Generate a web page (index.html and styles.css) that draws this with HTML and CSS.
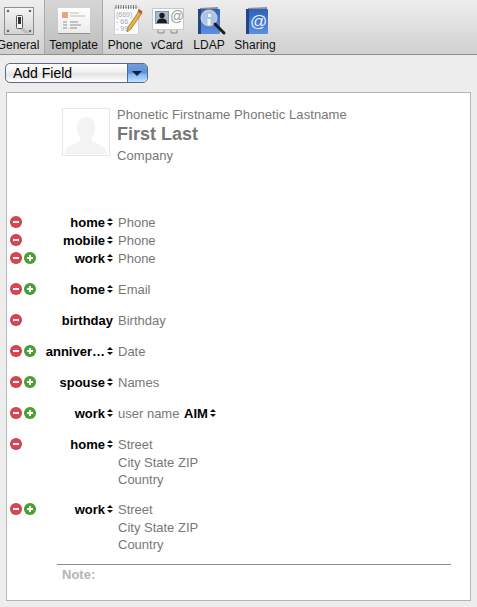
FILE: index.html
```html
<html>
    <head>
        <link rel="stylesheet" href="styles.css">
    </head>
    <body>
        <div class="toolbar">
            <div class="tool tool-general">
                <svg width="52" height="35" viewBox="0 0 52 35">
                    <defs>
                        <linearGradient id="plate" x1="0" y1="0" x2="0" y2="1"><stop offset="0" stop-color="#f6f6f6"/><stop offset="1" stop-color="#d2d2d2"/></linearGradient>
                        <linearGradient id="page" x1="0" y1="0" x2="0" y2="1"><stop offset="0" stop-color="#ffffff"/><stop offset="1" stop-color="#ececec"/></linearGradient>
                        <linearGradient id="book" x1="0" y1="0" x2="0" y2="1"><stop offset="0" stop-color="#2f62b8"/><stop offset="1" stop-color="#5b8fe0"/></linearGradient>
                    </defs>
                    <rect x="12.500" y="4.500" width="29" height="27" fill="url(#plate)" stroke="#8d8d8d"/>
                    <circle cx="16" cy="8" r="1.300" fill="#6a6a6a"/><circle cx="38" cy="8" r="1.300" fill="#6a6a6a"/>
                    <circle cx="16" cy="28" r="1.300" fill="#6a6a6a"/><circle cx="38" cy="28" r="1.300" fill="#6a6a6a"/>
                    <path d="M30 24l8 6h-6l-4-4z" fill="#bdbdbd"/>
                    <rect x="24.500" y="12.500" width="6" height="13" rx="1" fill="#f4f4f4" stroke="#555"/>
                    <rect x="26" y="14" width="3" height="7" fill="#333"/>
                </svg>
                <span>General</span>
            </div>
            <div class="tool tool-active">
                <svg width="57" height="35" viewBox="0 0 57 35">
                    <rect x="13" y="5" width="32" height="25" fill="url(#page)"/>
                    <path d="M13 30.500h32" stroke="#8f8f8f"/>
                    <rect x="17" y="9" width="6" height="6" fill="#eda27f"/>
                    <path d="M25 10h9M25 13h15" stroke="#cbb8ae"/>
                    <path d="M18 19h4M25 19h8M18 22h4M25 22h11M18 25h4M25 25h7" stroke="#8f8f8f"/>
                </svg>
                <span>Template</span>
            </div>
            <div class="tool">
                <svg width="44" height="35" viewBox="0 0 44 35">
                    <rect x="11.500" y="4.500" width="24" height="27" fill="#fbfbfb" stroke="#d0d0d0"/>
                    <path d="M13 2v4M15.500 2v4M18 2v4M20.500 2v4M23 2v4M25.500 2v4M28 2v4M30.500 2v4M33 2v4" stroke="#777"/>
                    <text x="13" y="14" class="icon-note">(669)</text>
                    <text x="13" y="21" class="icon-note">- 66</text>
                    <text x="13" y="28" class="icon-note">- 99</text>
                    <path d="M36 8l3 2-11 16-4 3 1-5z" fill="#e9b143" stroke="#7d5c22" stroke-width="0.600"/>
                    <path d="M36 6l3.500 2.500-1.500 2.500-3.500-2.500z" fill="#c9503c"/>
                </svg>
                <span>Phone</span>
            </div>
            <div class="tool">
                <svg width="40" height="35" viewBox="0 0 40 35">
                    <rect x="5.500" y="5.500" width="31" height="21" fill="#fcfcfc" stroke="#c8c8c8"/>
                    <rect x="8.500" y="8.500" width="13" height="12" fill="#aab7ce" stroke="#8494b0"/>
                    <circle cx="15" cy="12.500" r="2.700" fill="#1c1c1c"/>
                    <path d="M10 20c0-3.500 2.500-4.500 5-4.500s5 1 5 4.500z" fill="#1c1c1c"/>
                    <path d="M11 27v3h6v-3M24 27v3h6v-3" fill="#ddd" stroke="#8a8a8a"/>
                    <text x="23" y="18" class="icon-at">@</text>
                </svg>
                <span>vCard</span>
            </div>
            <div class="tool">
                <svg width="44" height="35" viewBox="0 0 44 35">
                    <path d="M13 5l18-1v5H13z" fill="#8d8f96"/>
                    <rect x="11" y="6" width="22" height="25" rx="1" fill="url(#book)"/>
                    <rect x="11" y="6" width="3" height="25" fill="#24457f"/>
                    <circle cx="22" cy="15" r="7.500" fill="#a9c4ec" stroke="#c4c8d0" stroke-width="2"/>
                    <path d="M21 11h3v3h-3zM20.500 16h3v6h-3z" fill="#f2f5fb"/>
                    <path d="M28 21l9 9" stroke="#1c1c1c" stroke-width="3" stroke-linecap="round"/>
                </svg>
                <span>LDAP</span>
            </div>
            <div class="tool">
                <svg width="48" height="35" viewBox="0 0 48 35">
                    <path d="M17 5l19-1v5H17z" fill="#8d8f96"/>
                    <rect x="15" y="6" width="22" height="25" rx="1" fill="url(#book)"/>
                    <rect x="15" y="6" width="3" height="25" fill="#24457f"/>
                    <text x="19" y="24" class="icon-share">@</text>
                </svg>
                <span>Sharing</span>
            </div>
        </div>

        <div class="content">
            <div class="add-field">
                <span class="add-label">Add Field</span>
                <span class="add-arrow"></span>
            </div>

            <div class="card">
                <div class="person">
                    <div class="photo">
                        <svg width="46" height="46" viewBox="0 0 46 46">
                            <path d="M2 45c0-7 6-9 12-11 4-2 4-4 3-6-2-2-3-6-3-10 0-6 4-10 9-10s9 4 9 10c0 4-1 8-3 10-1 2-1 4 3 6 6 2 12 4 12 11z" fill="#f3f3f3"/>
                        </svg>
                    </div>
                    <div class="names">
                        <div class="phonetic">Phonetic Firstname Phonetic Lastname</div>
                        <div class="full-name">First Last</div>
                        <div class="company">Company</div>
                    </div>
                </div>

                <div class="fields">
                    <div class="group">
                        <div class="row">
                            <span class="btns"><i class="btn minus"></i></span>
                            <span class="label">home</span><i class="updown"></i>
                            <span class="value">Phone</span>
                        </div>
                        <div class="row">
                            <span class="btns"><i class="btn minus"></i></span>
                            <span class="label">mobile</span><i class="updown"></i>
                            <span class="value">Phone</span>
                        </div>
                        <div class="row">
                            <span class="btns"><i class="btn minus"></i><i class="btn plus"></i></span>
                            <span class="label">work</span><i class="updown"></i>
                            <span class="value">Phone</span>
                        </div>
                    </div>
                    <div class="group">
                        <div class="row">
                            <span class="btns"><i class="btn minus"></i><i class="btn plus"></i></span>
                            <span class="label">home</span><i class="updown"></i>
                            <span class="value">Email</span>
                        </div>
                    </div>
                    <div class="group">
                        <div class="row">
                            <span class="btns"><i class="btn minus"></i></span>
                            <span class="label no-arrow">birthday</span>
                            <span class="value">Birthday</span>
                        </div>
                    </div>
                    <div class="group">
                        <div class="row">
                            <span class="btns"><i class="btn minus"></i><i class="btn plus"></i></span>
                            <span class="label">anniver…</span><i class="updown"></i>
                            <span class="value">Date</span>
                        </div>
                    </div>
                    <div class="group">
                        <div class="row">
                            <span class="btns"><i class="btn minus"></i><i class="btn plus"></i></span>
                            <span class="label">spouse</span><i class="updown"></i>
                            <span class="value">Names</span>
                        </div>
                    </div>
                    <div class="group">
                        <div class="row">
                            <span class="btns"><i class="btn minus"></i><i class="btn plus"></i></span>
                            <span class="label">work</span><i class="updown"></i>
                            <span class="value">user name <b class="service">AIM</b></span><i class="updown"></i>
                        </div>
                    </div>
                    <div class="group group-address">
                        <div class="row">
                            <span class="btns"><i class="btn minus"></i></span>
                            <span class="label">home</span><i class="updown"></i>
                            <span class="value">Street</span>
                        </div>
                        <div class="row"><span class="value indent">City State ZIP</span></div>
                        <div class="row"><span class="value indent">Country</span></div>
                    </div>
                    <div class="group group-address">
                        <div class="row">
                            <span class="btns"><i class="btn minus"></i><i class="btn plus"></i></span>
                            <span class="label">work</span><i class="updown"></i>
                            <span class="value">Street</span>
                        </div>
                        <div class="row"><span class="value indent">City State ZIP</span></div>
                        <div class="row"><span class="value indent">Country</span></div>
                    </div>
                </div>

                <div class="note">Note:</div>
            </div>
        </div>
    </body>
</html>
```

FILE: styles.css
```css
* {
    margin: 0;
    padding: 0;
    box-sizing: border-box;
}

html,body {
    height: 100%;
}

body {
    background: #ededed;
    font-family: "Liberation Sans", Arial, sans-serif;
    font-size: 13px;
    overflow: hidden;
}

.toolbar {
    height: 55px;
    display: flex;
    margin-left: -8px;
    background: linear-gradient(#eeeeee, #d0d0d0);
    border-bottom: 1px solid #8f8f8f;
}

.tool {
    width: 44px;
    height: 54px;
    flex: none;
    display: flex;
    flex-direction: column;
    align-items: center;
    color: #111;
    font-size: 12px;
    padding-top: 3px;
}

.tool svg {
    flex: none;
}

.tool span {
    line-height: 14px;
    white-space: nowrap;
}

.tool-general {
    width: 52px;
}

.tool-active {
    width: 59px;
    background: linear-gradient(#d6d6d6, #bcbcbc);
    border-left: 1px solid #a9a9a9;
    border-right: 1px solid #a9a9a9;
}

.tool:nth-child(4) {
    width: 40px;
}

.tool:nth-child(6) {
    width: 48px;
}

.icon-at {
    font-size: 14px;
    fill: #9a9a9a;
}

.icon-note {
    font-size: 7px;
    fill: #9fa8ba;
}

.icon-share {
    font-size: 17px;
    fill: #e6eefb;
}

.content {
    padding: 8px 6px 0;
}

.add-field {
    width: 143px;
    height: 20px;
    margin-left: -1px;
    display: flex;
    border: 1px solid #5d6b80;
    border-radius: 5px;
    overflow: hidden;
    background: linear-gradient(#ffffff, #f0f0f0 45%, #e2e2e2 55%, #ffffff);
}

.add-label {
    flex: 1;
    font-size: 14px;
    line-height: 18px;
    padding-left: 7px;
}

.add-arrow {
    width: 20px;
    background: linear-gradient(#6f9ddb, #5a92dc 50%, #7fb4ee 55%, #bfe3ff);
    border-left: 1px solid #4a6a9a;
    position: relative;
}

.add-arrow::after {
    content: "";
    position: absolute;
    left: 4px;
    top: 7px;
    border-left: 5px solid transparent;
    border-right: 5px solid transparent;
    border-top: 5px solid #10203a;
}

.card {
    margin-top: 9px;
    height: 509px;
    background: #fff;
    border: 1px solid #b5b5b5;
}

.person {
    display: flex;
    padding: 15px 0 0 55px;
    height: 120px;
}

.photo {
    width: 48px;
    height: 48px;
    border: 1px solid #e6e6e6;
    display: flex;
    justify-content: center;
    align-items: flex-end;
}

.names {
    margin-left: 7px;
    color: #777;
    letter-spacing: 0.08px;
}

.phonetic {
    line-height: 14px;
}

.full-name {
    font-size: 18px;
    font-weight: bold;
    line-height: 24px;
    letter-spacing: 0;
}

.company {
    line-height: 14px;
    margin-top: 3px;
}

.fields {
    display: flex;
    flex-direction: column;
    gap: 13px;
}

.group-address .row:last-child {
    height: 16px;
}

.row {
    height: 18px;
    display: flex;
    align-items: center;
    line-height: 18px;
}

.btns {
    width: 30px;
    flex: none;
    display: flex;
    gap: 2px;
    padding-left: 3px;
}

.btn {
    width: 12px;
    height: 12px;
    border-radius: 50%;
    position: relative;
    flex: none;
    box-shadow: inset 0 0 0 1px rgba(0, 0, 0, 0.08);
}

.btn::before {
    content: "";
    position: absolute;
    left: 3px;
    top: 5px;
    width: 6px;
    height: 2px;
    background: #fff;
}

.minus {
    background: #d9464f;
}

.plus {
    background: #4da236;
}

.plus::after {
    content: "";
    position: absolute;
    left: 5px;
    top: 3px;
    width: 2px;
    height: 6px;
    background: #fff;
}

.label {
    width: 68px;
    flex: none;
    padding-top: 2px;
    text-align: right;
    font-weight: bold;
    color: #000;
    white-space: nowrap;
}

.no-arrow {
    width: 76px;
}

.updown {
    width: 6px;
    height: 8px;
    margin-left: 2px;
    flex: none;
    display: flex;
    flex-direction: column;
    justify-content: space-between;
}

.updown::before {
    content: "";
    border-left: 3px solid transparent;
    border-right: 3px solid transparent;
    border-bottom: 3px solid #111;
}

.updown::after {
    content: "";
    border-left: 3px solid transparent;
    border-right: 3px solid transparent;
    border-top: 3px solid #111;
}

.value {
    margin-left: 5px;
    padding-top: 2px;
    color: #777;
    white-space: nowrap;
}

.indent {
    margin-left: 111px;
}

.service {
    color: #000;
    margin-left: 1px;
}

.note {
    margin: 12px 19px 0 50px;
    border-top: 1px solid #8a8a8a;
    padding: 2px 0 0 5px;
    font-weight: bold;
    color: #b5b5b5;
}
```
